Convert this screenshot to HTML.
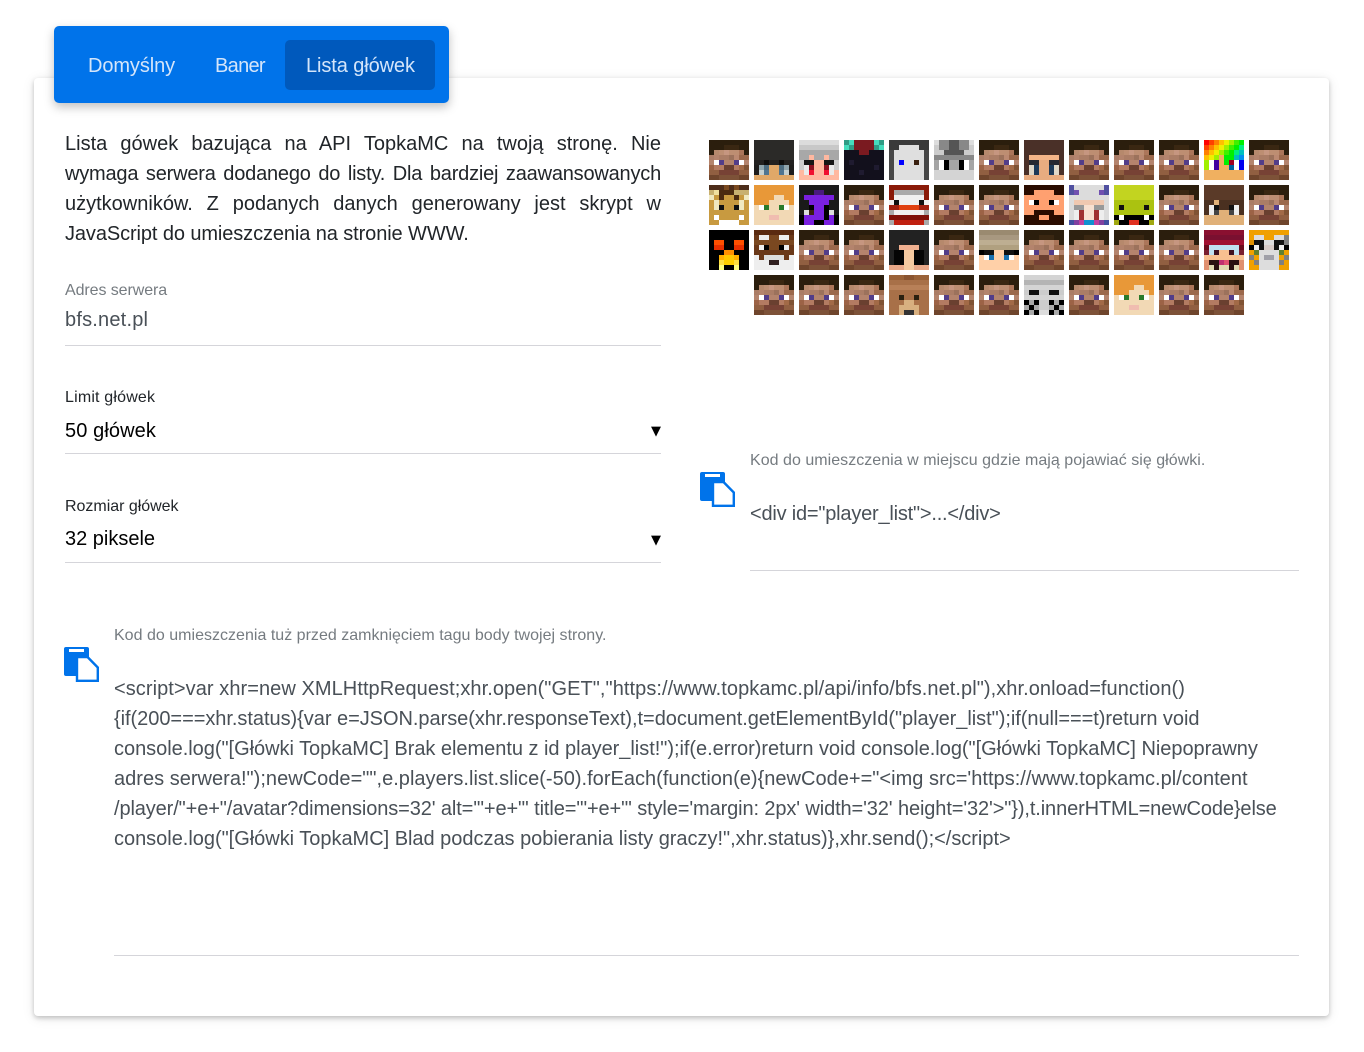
<!DOCTYPE html>
<html lang="pl">
<head>
<meta charset="utf-8">
<title>Lista główek</title>
<style>
html,body{margin:0;padding:0;background:#fff;width:1364px;height:1052px;overflow:hidden}
body{position:relative;font-family:"Liberation Sans",sans-serif;color:#212529}
.card{position:absolute;left:34px;top:78px;width:1295px;height:938px;background:#fff;border-radius:4px;box-shadow:0 2px 5px rgba(0,0,0,.2),0 2px 12px rgba(0,0,0,.1)}
.tabs{position:absolute;left:54px;top:26px;width:395px;height:77px;background:#0073ea;border-radius:5px;box-shadow:0 4px 10px rgba(0,0,0,.25)}
.act{position:absolute;left:285px;top:40px;width:150px;height:50px;background:#0059bc;border-radius:5px}
.t{position:absolute;white-space:nowrap;font-size:20px;line-height:30px;height:30px}
.w{color:#d4e5fa}
.j{width:596px;left:65px;text-align:justify;text-align-last:justify;white-space:normal;color:#212529}
.s{font-size:16px;color:#757b80}
.g{color:#495057}
.k{color:#000}
.d{color:#212529;font-size:16px}
.l{position:absolute;height:1px;background:#d5d5da}
svg{position:absolute}
.faces{filter:blur(.3px)}
</style>
</head>
<body>
<div class="card"></div>
<div class="tabs"></div>
<div class="act"></div>
<div class="t w" style="left:88px;top:51px;letter-spacing:-.1px">Domyślny</div>
<div class="t w" style="left:215px;top:51px;letter-spacing:-.7px">Baner</div>
<div class="t w" style="left:306px;top:51px;letter-spacing:-.1px">Lista główek</div>

<div class="t j" style="top:129px">Lista gówek bazująca na API TopkaMC na twoją stronę. Nie</div>
<div class="t j" style="top:159px;letter-spacing:-.2px">wymaga serwera dodanego do listy. Dla bardziej zaawansowanych</div>
<div class="t j" style="top:189px">użytkowników. Z podanych danych generowany jest skrypt w</div>
<div class="t" style="left:65px;top:219px;letter-spacing:-.1px">JavaScript do umieszczenia na stronie WWW.</div>

<div class="t s" style="left:65px;top:276px;letter-spacing:-.08px">Adres serwera</div>
<div class="t g" style="left:65px;top:305px;letter-spacing:.2px">bfs.net.pl</div>
<div class="l" style="left:65px;top:345px;width:596px"></div>

<div class="t d" style="left:65px;top:383px;letter-spacing:.18px">Limit główek</div>
<div class="t k" style="left:65px;top:416px;letter-spacing:.1px">50 główek</div>
<div class="t k" style="left:651px;top:417px;font-size:13px;font-family:'DejaVu Sans',sans-serif">▼</div>
<div class="l" style="left:65px;top:453px;width:596px"></div>

<div class="t d" style="left:65px;top:492px;letter-spacing:-.02px">Rozmiar główek</div>
<div class="t k" style="left:65px;top:524px">32 piksele</div>
<div class="t k" style="left:651px;top:526px;font-size:13px;font-family:'DejaVu Sans',sans-serif">▼</div>
<div class="l" style="left:65px;top:562px;width:596px"></div>

<div class="t s" style="left:750px;top:446px;letter-spacing:.03px">Kod do umieszczenia w miejscu gdzie mają pojawiać się główki.</div>
<div class="t g" style="left:750px;top:499px;letter-spacing:-.21px">&lt;div id="player_list"&gt;...&lt;/div&gt;</div>
<div class="l" style="left:750px;top:570px;width:549px"></div>

<div class="t s" style="left:114px;top:621px;letter-spacing:.015px">Kod do umieszczenia tuż przed zamknięciem tagu body twojej strony.</div>
<div class="t g" style="left:114px;top:674px;letter-spacing:.065px">&lt;script&gt;var xhr=new XMLHttpRequest;xhr.open("GET","https://www.topkamc.pl/api/info/bfs.net.pl"),xhr.onload=function()</div>
<div class="t g" style="left:114px;top:704px;letter-spacing:-.04px">{if(200===xhr.status){var e=JSON.parse(xhr.responseText),t=document.getElementById("player_list");if(null===t)return void</div>
<div class="t g" style="left:114px;top:734px;letter-spacing:-.03px">console.log("[Główki TopkaMC] Brak elementu z id player_list!");if(e.error)return void console.log("[Główki TopkaMC] Niepoprawny</div>
<div class="t g" style="left:114px;top:764px;letter-spacing:.02px">adres serwera!");newCode="",e.players.list.slice(-50).forEach(function(e){newCode+="&lt;img src='https://www.topkamc.pl/content</div>
<div class="t g" style="left:114px;top:794px;letter-spacing:-.115px">/player/"+e+"/avatar?dimensions=32' alt='"+e+"' title='"+e+"' style='margin: 2px' width='32' height='32'&gt;"}),t.innerHTML=newCode}else</div>
<div class="t g" style="left:114px;top:824px;letter-spacing:-.02px">console.log("[Główki TopkaMC] Blad podczas pobierania listy graczy!",xhr.status)},xhr.send();&lt;/script&gt;</div>
<div class="l" style="left:114px;top:955px;width:1185px"></div>

<svg style="left:700px;top:472px" width="36" height="36" viewBox="0 0 36 36"><path fill="#0073ea" d="M2 0h21a2 2 0 0 1 2 2v27H2a2 2 0 0 1-2-2V2a2 2 0 0 1 2-2z"/><path fill="#fff" d="M5 2h15v3H5z"/><path fill="#fff" stroke="#0073ea" stroke-width="2.400" d="M13 10h10.500l10.300 10.500V33.800H13z"/></svg>
<svg style="left:64px;top:647px" width="36" height="36" viewBox="0 0 36 36"><path fill="#0073ea" d="M2 0h21a2 2 0 0 1 2 2v27H2a2 2 0 0 1-2-2V2a2 2 0 0 1 2-2z"/><path fill="#fff" d="M5 2h15v3H5z"/><path fill="#fff" stroke="#0073ea" stroke-width="2.400" d="M13 10h10.500l10.300 10.500V33.800H13z"/></svg>

<svg class="faces" style="left:0;top:0" width="1364" height="1052" viewBox="0 0 1364 1052" fill="none" stroke-width="1">
<defs>
<symbol id="S" viewBox="0 0 8 8"><g stroke-width="1" fill="none">
<path stroke="#2b1e0d" d="M0 .5h8M0 1.500h3"/><path stroke="#3a2712" d="M3 1.500h3"/><path stroke="#2b1e0d" d="M6 1.500h2M0 2.500h1M7 2.500h1"/><path stroke="#b6896c" d="M1 2.500h1"/><path stroke="#bd8e72" d="M2 2.500h1M4 2.500h2"/><path stroke="#c69680" d="M3 2.500h1"/><path stroke="#ac765a" d="M6 2.500h1"/><path stroke="#ab7d66" d="M0 3.500h1M2 3.500h2"/><path stroke="#b4846d" d="M1 3.500h1"/><path stroke="#9c725c" d="M4 3.500h1"/><path stroke="#bb8972" d="M5 3.500h1"/><path stroke="#9c694c" d="M6 3.500h2"/><path stroke="#b4846d" d="M0 4.500h1M3 4.500h2M7 4.500h1"/><path stroke="#fff" d="M1 4.500h1M6 4.500h1"/><path stroke="#523d89" d="M2 4.500h1M5 4.500h1"/><path stroke="#9c6346" d="M0 5.500h1"/><path stroke="#b37b62" d="M1 5.500h2M5 5.500h1"/><path stroke="#a26a47" d="M6 5.500h1"/><path stroke="#805334" d="M7 5.500h1"/><path stroke="#6a4030" d="M3 5.500h2"/><path stroke="#915f41" d="M0 6.500h2M6 6.500h2"/><path stroke="#774235" d="M2 6.500h4"/><path stroke="#6f452c" d="M0 7.500h2M6 7.500h2"/><path stroke="#7d5238" d="M2 7.500h4"/></g></symbol>
<symbol id="D" viewBox="0 0 8 8"><g><path stroke="#2b2a28" d="M0 .5h8M0 1.500h8M0 2.500h8M0 3.500h8"/><path stroke="#222120" d="M0 4.500h2M6 4.500h2M3 4.500h2"/><path stroke="#0e0e0d" d="M2 4.500h1M5 4.500h1"/><path stroke="#1e1d1c" d="M0 5.500h1M7 5.500h1M0 6.500h1M7 6.500h1"/><path stroke="#8fa5ad" d="M1 5.500h1M6 5.500h1"/><path stroke="#4c6c80" d="M2 5.500h1M5 5.500h1"/><path stroke="#e0a868" d="M3 5.500h2M3 6.500h2M0 7.500h8"/><path stroke="#c4d0d0" d="M1 6.500h1M6 6.500h1"/><path stroke="#4f7590" d="M2 6.500h1M5 6.500h1"/></g></symbol>
<symbol id="W" viewBox="0 0 8 8"><g><path stroke="#dcdcdc" d="M0 .5h8"/><path stroke="#c8c8c8" d="M0 1.500h8"/><path stroke="#a8a8a8" d="M0 2.500h8M0 3.500h2M3 3.500h2M6 3.500h2"/><path stroke="#ffb8a0" d="M2 3.500h1M5 3.500h1M3 4.500h2M3 5.500h2M3 6.500h2M0 6.500h1M7 6.500h1M0 7.500h8"/><path stroke="#ccc" d="M0 4.500h1M7 4.500h1M0 5.500h1M7 5.500h1"/><path stroke="#151515" d="M1 4.500h2M5 4.500h2"/><path stroke="#eaeaea" d="M1 5.500h1M6 5.500h1M1 6.500h1M6 6.500h1"/><path stroke="#8a1020" d="M2 5.500h1M5 5.500h1"/><path stroke="#f01030" d="M2 6.500h1M5 6.500h1"/></g></symbol>
<symbol id="E" viewBox="0 0 8 8"><g><path stroke="#12101c" d="M0 2.500h8M0 3.500h8M0 4.500h8M0 5.500h8M0 6.500h8M0 7.500h8"/><path stroke="#2f9c85" d="M0 .5h1M7 .5h1M1 1.500h1M6 1.500h1"/><path stroke="#45dcbc" d="M1 .5h1M6 .5h1M0 1.500h1M7 1.500h1"/><path stroke="#7a1a20" d="M2 .5h4M2 1.500h4M3 2.500h2"/><path stroke="#1f1b30" d="M1 4.500h1M6 5.500h1M3 6.500h1"/></g></symbol>
<symbol id="G" viewBox="0 0 8 8"><g><path stroke="#3a3a3a" d="M0 .5h8M0 1.500h2M6 1.500h2"/><path stroke="#474747" d="M0 2.500h1M7 2.500h1M0 3.500h1M7 3.500h1M0 4.500h1M7 4.500h1M0 5.500h1M7 5.500h1M0 6.500h1M7 6.500h1M0 7.500h1M7 7.500h1"/><path stroke="#dfdfdf" d="M2 1.500h4M1 2.500h6M1 3.500h6M1 4.500h6M1 5.500h6M1 6.500h6M1 7.500h6"/><path stroke="#0000ff" d="M2 4.500h1"/><path stroke="#3a2010" d="M5 4.500h1"/></g></symbol>
<symbol id="Y" viewBox="0 0 8 8"><g><path stroke="#ddd" d="M0 .5h1M7 .5h1"/><path stroke="#888" d="M1 .5h2M5 .5h2M1 1.500h2M5 1.500h2M0 3.500h8"/><path stroke="#555" d="M3 .5h2M3 1.500h2M2 2.500h4"/><path stroke="#ccc" d="M0 1.500h1M7 1.500h1M0 2.500h2M6 2.500h2"/><path stroke="#a5a5a5" d="M0 4.500h1M3 4.500h2M7 4.500h1M0 5.500h1M3 5.500h2M7 5.500h1"/><path stroke="#fff" d="M1 4.500h1M6 4.500h1M1 5.500h1M6 5.500h1"/><path stroke="#000" d="M2 4.500h1M5 4.500h1M2 5.500h1M5 5.500h1"/><path stroke="#d4d4d4" d="M0 6.500h8M0 7.500h8"/></g></symbol>
<symbol id="B" viewBox="0 0 8 8"><g><path stroke="#4a3028" d="M0 .5h8M0 1.500h8M0 2.500h8M0 3.500h1M7 3.500h1M0 4.500h1M7 4.500h1M0 5.500h1M7 5.500h1M0 6.500h1M7 6.500h1"/><path stroke="#f3b488" d="M1 3.500h6"/><path stroke="#262830" d="M1 4.500h2M5 4.500h2"/><path stroke="#e8ac80" d="M3 4.500h2M3 5.500h2M3 6.500h2M0 7.500h8"/><path stroke="#e0d8c8" d="M1 5.500h1M6 5.500h1M1 6.500h1M6 6.500h1"/><path stroke="#1e3a58" d="M2 5.500h1M5 5.500h1M2 6.500h1M5 6.500h1"/></g></symbol>
<symbol id="R" viewBox="0 0 8 8"><g><path stroke="#ff0000" d="M0 .5h1"/><path stroke="#ff4000" d="M1 .5h1M0 1.500h1"/><path stroke="#ff8000" d="M2 .5h1M1 1.500h1M0 2.500h1"/><path stroke="#ffc000" d="M3 .5h1M2 1.500h1M1 2.500h1M0 3.500h1"/><path stroke="#f0f000" d="M4 .5h1M3 1.500h1M2 2.500h1M1 3.500h1"/><path stroke="#a0f000" d="M5 .5h1M4 1.500h1M3 2.500h1M2 3.500h1M0 4.500h1M0 5.500h1"/><path stroke="#40f000" d="M6 .5h1M5 1.500h1M4 2.500h1"/><path stroke="#00f000" d="M7 .5h1M6 1.500h1M5 2.500h1M4 3.500h2M4 4.500h1"/><path stroke="#00f080" d="M7 1.500h1M6 2.500h1"/><path stroke="#00c0c0" d="M7 2.500h1M6 3.500h1"/><path stroke="#0090f0" d="M7 3.500h1"/><path stroke="#f0b060" d="M3 3.500h1M3 4.500h1M3 5.500h2M0 6.500h8M0 7.500h8"/><path stroke="#fff" d="M1 4.500h1M6 4.500h1M1 5.500h1M6 5.500h1"/><path stroke="#4000a0" d="M2 4.500h1M2 5.500h1"/><path stroke="#a00020" d="M5 4.500h1"/><path stroke="#0060a0" d="M5 5.500h1"/><path stroke="#0000f0" d="M7 4.500h1M7 5.500h1"/></g></symbol>
<symbol id="C" viewBox="0 0 8 8"><g><path stroke="#4d2d1a" d="M0 .5h3M4 .5h1M6 .5h2"/><path stroke="#7a4a20" d="M3 .5h1M5 .5h1"/><path stroke="#c8b070" d="M0 1.500h1M5 1.500h3"/><path stroke="#f0e0a0" d="M1 1.500h1"/><path stroke="#4a2a10" d="M2 1.500h3M2 2.500h1M5 2.500h1"/><path stroke="#f0e8c0" d="M0 2.500h1M7 2.500h1M1 3.500h1M6 3.500h1M1 4.500h1M6 4.500h1"/><path stroke="#c89a40" d="M1 2.500h1M3 2.500h2M6 2.500h1M0 3.500h1M7 3.500h1M2 3.500h4M0 4.500h1M3 4.500h2M7 4.500h1M0 5.500h8M0 6.500h1M2 6.500h4M7 6.500h1M0 7.500h2M6 7.500h2"/><path stroke="#111" d="M2 4.500h1M5 4.500h1"/><path stroke="#fff" d="M1 6.500h1M6 6.500h1M2 7.500h4"/></g></symbol>
<symbol id="A" viewBox="0 0 8 8"><g><path stroke="#e89838" d="M0 .5h8M0 1.500h8M0 2.500h4M6 2.500h2M0 3.500h3M7 3.500h1"/><path stroke="#f2d9b5" d="M4 2.500h2M3 3.500h4M0 4.500h1M3 4.500h2M7 4.500h1M0 5.500h8M0 6.500h3M5 6.500h3M0 7.500h8"/><path stroke="#fff" d="M1 4.500h1M6 4.500h1"/><path stroke="#2a7a2a" d="M2 4.500h1M5 4.500h1"/><path stroke="#f0bcb0" d="M3 6.500h2"/></g></symbol>
<symbol id="P" viewBox="0 0 8 8"><g><path stroke="#1a1a1a" d="M0 .5h8M0 1.500h3M5 1.500h3M0 2.500h1M7 2.500h1M0 3.500h2M6 3.500h2M0 4.500h2M6 4.500h2M0 5.500h1M7 5.500h1"/><path stroke="#4a1a80" d="M3 1.500h2"/><path stroke="#7a20e0" d="M1 2.500h6M2 3.500h4M3 4.500h2M3 5.500h2M1 6.500h3M4 6.500h1M6 6.500h1M1 7.500h2M5 7.500h2"/><path stroke="#000" d="M2 4.500h1M5 4.500h1M5 5.500h1M0 6.500h1M7 6.500h1M5 6.500h1M0 7.500h1M3 7.500h2M7 7.500h1"/><path stroke="#ddd" d="M1 5.500h1M6 5.500h1"/><path stroke="#3a2010" d="M2 5.500h1"/></g></symbol>
<symbol id="T" viewBox="0 0 8 8"><g><path stroke="#8a1a08" d="M0 .5h8M0 1.500h1M7 1.500h1M0 2.500h1M7 2.500h1"/><path stroke="#aaa" d="M1 1.500h6M0 7.500h1M7 7.500h1M0 5.500h1M7 5.500h1"/><path stroke="#f0f0f0" d="M1 2.500h6M0 3.500h1M2 3.500h4M7 3.500h1M1 5.500h6"/><path stroke="#111" d="M1 3.500h1M6 3.500h1"/><path stroke="#a02010" d="M0 4.500h2M6 4.500h2"/><path stroke="#e04010" d="M2 4.500h4"/><path stroke="#801008" d="M0 6.500h8"/><path stroke="#c02010" d="M1 7.500h6"/></g></symbol>
<symbol id="O" viewBox="0 0 8 8"><g><path stroke="#2a0c00" d="M0 .5h8M0 1.500h2M6 1.500h2M2 5.500h4M0 6.500h3M5 6.500h3M0 7.500h8"/><path stroke="#ffa070" d="M2 1.500h4M0 2.500h8M0 3.500h1M3 3.500h2M7 3.500h1M0 4.500h8M0 5.500h2M6 5.500h2M3 6.500h2"/><path stroke="#fff" d="M1 3.500h1M6 3.500h1"/><path stroke="#000" d="M2 3.500h1M5 3.500h1"/></g></symbol>
<symbol id="U" viewBox="0 0 8 8"><g><path stroke="#5050a0" d="M0 .5h1M7 .5h1M0 1.500h1M7 1.500h1"/><path stroke="#7050b0" d="M1 1.500h1M6 1.500h1"/><path stroke="#dcdcdc" d="M1 .5h6M2 1.500h4M0 2.500h8M0 3.500h1M7 3.500h1M0 4.500h1M7 4.500h1M0 5.500h1M7 5.500h1M0 6.500h1M7 6.500h1"/><path stroke="#f0c8b0" d="M1 3.500h6"/><path stroke="#999" d="M1 4.500h2M5 4.500h2"/><path stroke="#f8e0d0" d="M3 4.500h2M3 5.500h2M3 6.500h2"/><path stroke="#eee" d="M1 5.500h1M6 5.500h1M1 6.500h1M6 6.500h1"/><path stroke="#a03030" d="M2 5.500h1M5 5.500h1M2 6.500h1M5 6.500h1"/><path stroke="#4050a0" d="M0 7.500h1M7 7.500h1"/><path stroke="#8040a0" d="M1 7.500h1M6 7.500h1"/><path stroke="#c040a0" d="M2 7.500h1M5 7.500h1"/><path stroke="#1090d0" d="M3 7.500h2"/></g></symbol>
<symbol id="L" viewBox="0 0 8 8"><g><path stroke="#c2d420" d="M0 .5h8M0 1.500h8M0 2.500h8"/><path stroke="#abc210" d="M0 3.500h8M0 4.500h1M2 4.500h4M7 4.500h1M0 5.500h8"/><path stroke="#111" d="M1 4.500h1M6 4.500h1"/><path stroke="#000" d="M0 6.500h1M2 6.500h4M7 6.500h1M1 7.500h2M5 7.500h2"/><path stroke="#fff" d="M1 6.500h1M6 6.500h1"/><path stroke="#a0a810" d="M0 7.500h1M7 7.500h1"/><path stroke="#e03020" d="M3 7.500h2"/></g></symbol>
<symbol id="H" viewBox="0 0 8 8"><g><path stroke="#5a3a28" d="M0 .5h8M0 1.500h8M0 2.500h8"/><path stroke="#4a3020" d="M0 3.500h2M3 3.500h5M0 4.500h1M3 4.500h2M7 4.500h1M0 5.500h1M7 5.500h1"/><path stroke="#e0b078" d="M2 3.500h1M3 5.500h2M0 6.500h8M0 7.500h8"/><path stroke="#eee" d="M1 4.500h1M6 4.500h1M1 5.500h1M6 5.500h1"/><path stroke="#111" d="M2 4.500h1M5 4.500h1"/><path stroke="#444" d="M2 5.500h1M5 5.500h1"/></g></symbol>
<symbol id="K" viewBox="0 0 8 8"><g><path stroke="#000" d="M0 .5h8M0 1.500h8M0 2.500h8M0 3.500h8M0 4.500h8M0 5.500h8M0 6.500h8M0 7.500h8"/><path stroke="#ff5000" d="M1 2.500h2M5 2.500h2"/><path stroke="#e83000" d="M1 3.500h2M5 3.500h2"/><path stroke="#ff9000" d="M3 4.500h2"/><path stroke="#ffb000" d="M2 5.500h1M5 5.500h1"/><path stroke="#ffc800" d="M3 5.500h2"/><path stroke="#ffe040" d="M2 6.500h1M5 6.500h1"/><path stroke="#ffd000" d="M3 6.500h2"/><path stroke="#ffff80" d="M2 7.500h1M5 7.500h1"/></g></symbol>
<symbol id="N" viewBox="0 0 8 8"><g><path stroke="#5a2a10" d="M0 .5h8"/><path stroke="#6a3818" d="M0 1.500h1M7 1.500h1M0 3.500h1M7 3.500h1M0 4.500h8M1 5.500h1M6 5.500h1"/><path stroke="#eee" d="M1 1.500h2M5 1.500h2M1 3.500h1M6 3.500h1M0 5.500h1M7 5.500h1M0 6.500h3M5 6.500h3M0 7.500h8"/><path stroke="#7a4820" d="M3 1.500h2M0 2.500h8M3 3.500h2"/><path stroke="#000" d="M2 3.500h1M5 3.500h1"/><path stroke="#ddd" d="M2 5.500h4"/><path stroke="#302020" d="M3 6.500h2"/></g></symbol>
<symbol id="J" viewBox="0 0 8 8"><g><path stroke="#222" d="M0 .5h8M0 1.500h8M0 2.500h8M0 3.500h2M6 3.500h2M0 4.500h1M7 4.500h1M0 5.500h1M7 5.500h1M0 6.500h1M7 6.500h1"/><path stroke="#f0b090" d="M2 3.500h4"/><path stroke="#050505" d="M1 4.500h2M5 4.500h2M1 5.500h2M5 5.500h2M1 6.500h2M5 6.500h2"/><path stroke="#f5c9a0" d="M3 4.500h2M3 5.500h2M3 6.500h2M3 7.500h2"/><path stroke="#e8a888" d="M0 7.500h3M5 7.500h3"/></g></symbol>
<symbol id="V" viewBox="0 0 8 8"><g><path stroke="#9a8a70" d="M0 .5h8"/><path stroke="#a89880" d="M0 1.500h8"/><path stroke="#bdae92" d="M0 2.500h8"/><path stroke="#b0a080" d="M0 3.500h8"/><path stroke="#000" d="M0 4.500h1M7 4.500h1"/><path stroke="#111" d="M1 4.500h2M5 4.500h2"/><path stroke="#ffd0a8" d="M3 4.500h2M0 5.500h1M3 5.500h2M7 5.500h1M0 6.500h8M0 7.500h8"/><path stroke="#fff" d="M1 5.500h1M6 5.500h1"/><path stroke="#1870b0" d="M2 5.500h1M5 5.500h1"/></g></symbol>
<symbol id="X" viewBox="0 0 8 8"><g><path stroke="#8a1030" d="M0 .5h8"/><path stroke="#7a1030" d="M0 1.500h8"/><path stroke="#a01030" d="M0 2.500h8"/><path stroke="#6a0c1c" d="M0 3.500h1M7 3.500h1"/><path stroke="#c0e0f0" d="M1 3.500h6M1 4.500h1M6 4.500h1"/><path stroke="#7a2030" d="M0 4.500h1M7 4.500h1"/><path stroke="#401020" d="M2 4.500h1M5 4.500h1"/><path stroke="#f8c090" d="M3 4.500h2M0 5.500h8"/><path stroke="#e09070" d="M0 6.500h1M7 6.500h1M0 7.500h1M7 7.500h1"/><path stroke="#2a1010" d="M1 6.500h2M5 6.500h2M2 7.500h1M5 7.500h1"/><path stroke="#c03070" d="M3 6.500h1"/><path stroke="#e05070" d="M4 6.500h1"/><path stroke="#e0d8b0" d="M1 7.500h1M3 7.500h2M6 7.500h1"/></g></symbol>
<symbol id="M" viewBox="0 0 8 8"><g><path stroke="#f0a000" d="M0 .5h8M3 1.500h2M0 1.500h1M0 4.500h1M1 5.500h1M6 5.500h1M0 6.500h1M7 6.500h1M0 7.500h2M6 7.500h2M7 4.500h1"/><path stroke="#808080" d="M7 1.500h1M7 2.500h1M0 5.500h1M7 5.500h1M1 6.500h1M6 6.500h1"/><path stroke="#ddd" d="M1 1.500h2M5 1.500h2M3 2.500h2M2 4.500h4M2 5.500h1M5 5.500h1M2 6.500h4M2 7.500h4"/><path stroke="#e09000" d="M0 2.500h1"/><path stroke="#111" d="M1 2.500h2M5 2.500h2M2 3.500h1M5 3.500h1"/><path stroke="#000" d="M0 3.500h1M7 3.500h1"/><path stroke="#eee" d="M1 3.500h1M6 3.500h1"/><path stroke="#d8ccc8" d="M3 3.500h2"/><path stroke="#608030" d="M1 4.500h1M6 4.500h1"/><path stroke="#a0a0a8" d="M3 5.500h2"/></g></symbol>
<symbol id="Z" viewBox="0 0 8 8"><g><path stroke="#9a6238" d="M0 .5h3M5 .5h3"/><path stroke="#8a5430" d="M3 .5h2"/><path stroke="#a87048" d="M0 1.500h8M0 3.500h8M0 4.500h2M3 4.500h2M6 4.500h2M0 5.500h3M5 5.500h3M0 6.500h2M6 6.500h2M0 7.500h2M6 7.500h2"/><path stroke="#b88058" d="M0 2.500h8"/><path stroke="#2a2010" d="M2 4.500h1M5 4.500h1"/><path stroke="#d8b080" d="M3 5.500h2M2 6.500h4M2 7.500h1M5 7.500h1"/><path stroke="#333" d="M3 7.500h2"/></g></symbol>
<symbol id="Q" viewBox="0 0 8 8"><g><path stroke="#d4d4d4" d="M0 .5h8M0 2.500h8M0 4.500h8"/><path stroke="#b4b4b4" d="M0 1.500h8"/><path stroke="#ccc" d="M0 3.500h1M3 3.500h2M7 3.500h1M3 5.500h2M3 6.500h2"/><path stroke="#111" d="M1 3.500h2M5 3.500h2"/><path stroke="#000" d="M0 5.500h1M2 5.500h1M5 5.500h1M7 5.500h1M1 6.500h1M6 6.500h1M0 7.500h1M2 7.500h1M5 7.500h1M7 7.500h1"/><path stroke="#aaa" d="M1 5.500h1M6 5.500h1M0 6.500h1M2 6.500h1M5 6.500h1M7 6.500h1M1 7.500h1M6 7.500h1"/><path stroke="#ddd" d="M3 7.500h2"/></g></symbol>
</defs>
<use href="#S" x="709" y="140" width="40" height="40"/><use href="#D" x="754" y="140" width="40" height="40"/><use href="#W" x="799" y="140" width="40" height="40"/><use href="#E" x="844" y="140" width="40" height="40"/><use href="#G" x="889" y="140" width="40" height="40"/><use href="#Y" x="934" y="140" width="40" height="40"/><use href="#S" x="979" y="140" width="40" height="40"/><use href="#B" x="1024" y="140" width="40" height="40"/><use href="#S" x="1069" y="140" width="40" height="40"/><use href="#S" x="1114" y="140" width="40" height="40"/><use href="#S" x="1159" y="140" width="40" height="40"/><use href="#R" x="1204" y="140" width="40" height="40"/><use href="#S" x="1249" y="140" width="40" height="40"/>
<use href="#C" x="709" y="185" width="40" height="40"/><use href="#A" x="754" y="185" width="40" height="40"/><use href="#P" x="799" y="185" width="40" height="40"/><use href="#S" x="844" y="185" width="40" height="40"/><use href="#T" x="889" y="185" width="40" height="40"/><use href="#S" x="934" y="185" width="40" height="40"/><use href="#S" x="979" y="185" width="40" height="40"/><use href="#O" x="1024" y="185" width="40" height="40"/><use href="#U" x="1069" y="185" width="40" height="40"/><use href="#L" x="1114" y="185" width="40" height="40"/><use href="#S" x="1159" y="185" width="40" height="40"/><use href="#H" x="1204" y="185" width="40" height="40"/><use href="#S" x="1249" y="185" width="40" height="40"/>
<use href="#K" x="709" y="230" width="40" height="40"/><use href="#N" x="754" y="230" width="40" height="40"/><use href="#S" x="799" y="230" width="40" height="40"/><use href="#S" x="844" y="230" width="40" height="40"/><use href="#J" x="889" y="230" width="40" height="40"/><use href="#S" x="934" y="230" width="40" height="40"/><use href="#V" x="979" y="230" width="40" height="40"/><use href="#S" x="1024" y="230" width="40" height="40"/><use href="#S" x="1069" y="230" width="40" height="40"/><use href="#S" x="1114" y="230" width="40" height="40"/><use href="#S" x="1159" y="230" width="40" height="40"/><use href="#X" x="1204" y="230" width="40" height="40"/><use href="#M" x="1249" y="230" width="40" height="40"/>
<use href="#S" x="754" y="275" width="40" height="40"/><use href="#S" x="799" y="275" width="40" height="40"/><use href="#S" x="844" y="275" width="40" height="40"/><use href="#Z" x="889" y="275" width="40" height="40"/><use href="#S" x="934" y="275" width="40" height="40"/><use href="#S" x="979" y="275" width="40" height="40"/><use href="#Q" x="1024" y="275" width="40" height="40"/><use href="#S" x="1069" y="275" width="40" height="40"/><use href="#A" x="1114" y="275" width="40" height="40"/><use href="#S" x="1159" y="275" width="40" height="40"/><use href="#S" x="1204" y="275" width="40" height="40"/>
</svg>
</body>
</html>
